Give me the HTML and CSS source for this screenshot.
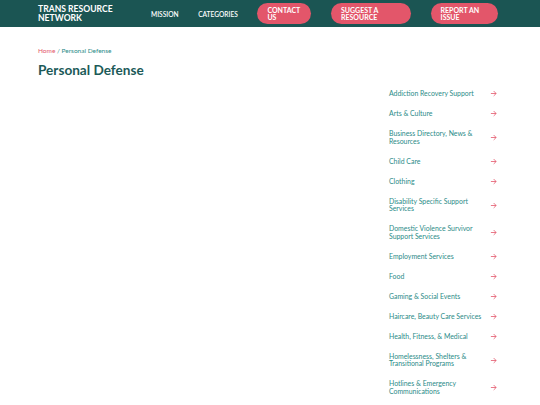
FILE: index.html
```html
<!DOCTYPE html>
<html lang="en">
<head>
<meta charset="utf-8">
<title>Personal Defense - Trans Resource Network</title>
<link rel="stylesheet" href="styles.css">
</head>
<body>
<header class="site-header">
  <div class="header-inner">
    <a class="logo" href="#"><span class="logo-line">TRANS RESOURCE</span><span class="logo-line">NETWORK</span></a>
    <nav class="main-nav">
      <a class="nav-link" href="#">MISSION</a>
      <a class="nav-link" href="#">CATEGORIES</a>
      <a class="btn btn-contact" href="#">CONTACT<br>US</a>
      <a class="btn btn-suggest" href="#">SUGGEST A<br>RESOURCE</a>
      <a class="btn btn-report" href="#">REPORT AN<br>ISSUE</a>
    </nav>
  </div>
</header>
<main class="page">
  <div class="breadcrumb"><a href="#" class="crumb-home">Home</a> / Personal Defense</div>
  <h1 class="page-title">Personal Defense</h1>
  <div class="content">
    <div class="main-col"></div>
    <aside class="sidebar">
      <ul class="cat-list">
        <li><a href="#"><span>Addiction Recovery Support</span><svg class="arrow" viewBox="0 0 8 8"><path d="M1 4H7M4.2 1.2L7 4L4.2 6.8"/></svg></a></li>
        <li><a href="#"><span>Arts &amp; Culture</span><svg class="arrow" viewBox="0 0 8 8"><path d="M1 4H7M4.2 1.2L7 4L4.2 6.8"/></svg></a></li>
        <li><a href="#"><span>Business Directory, News &amp; Resources</span><svg class="arrow" viewBox="0 0 8 8"><path d="M1 4H7M4.2 1.2L7 4L4.2 6.8"/></svg></a></li>
        <li><a href="#"><span>Child Care</span><svg class="arrow" viewBox="0 0 8 8"><path d="M1 4H7M4.2 1.2L7 4L4.2 6.8"/></svg></a></li>
        <li><a href="#"><span>Clothing</span><svg class="arrow" viewBox="0 0 8 8"><path d="M1 4H7M4.2 1.2L7 4L4.2 6.8"/></svg></a></li>
        <li><a href="#"><span>Disability Specific Support Services</span><svg class="arrow" viewBox="0 0 8 8"><path d="M1 4H7M4.2 1.2L7 4L4.2 6.8"/></svg></a></li>
        <li><a href="#"><span>Domestic Violence Survivor Support Services</span><svg class="arrow" viewBox="0 0 8 8"><path d="M1 4H7M4.2 1.2L7 4L4.2 6.8"/></svg></a></li>
        <li><a href="#"><span>Employment Services</span><svg class="arrow" viewBox="0 0 8 8"><path d="M1 4H7M4.2 1.2L7 4L4.2 6.8"/></svg></a></li>
        <li><a href="#"><span>Food</span><svg class="arrow" viewBox="0 0 8 8"><path d="M1 4H7M4.2 1.2L7 4L4.2 6.8"/></svg></a></li>
        <li><a href="#"><span>Gaming &amp; Social Events</span><svg class="arrow" viewBox="0 0 8 8"><path d="M1 4H7M4.2 1.2L7 4L4.2 6.8"/></svg></a></li>
        <li><a href="#"><span>Haircare, Beauty Care Services</span><svg class="arrow" viewBox="0 0 8 8"><path d="M1 4H7M4.2 1.2L7 4L4.2 6.8"/></svg></a></li>
        <li><a href="#"><span>Health, Fitness, &amp; Medical</span><svg class="arrow" viewBox="0 0 8 8"><path d="M1 4H7M4.2 1.2L7 4L4.2 6.8"/></svg></a></li>
        <li><a href="#"><span>Homelessness, Shelters &amp; Transitional Programs</span><svg class="arrow" viewBox="0 0 8 8"><path d="M1 4H7M4.2 1.2L7 4L4.2 6.8"/></svg></a></li>
        <li><a href="#"><span>Hotlines &amp; Emergency Communications</span><svg class="arrow" viewBox="0 0 8 8"><path d="M1 4H7M4.2 1.2L7 4L4.2 6.8"/></svg></a></li>
      </ul>
    </aside>
  </div>
</main>
</body>
</html>
```
FILE: styles.css
```css
* { box-sizing: border-box; }
body {
  margin: 0;
  font-family: Lato, "Liberation Sans", sans-serif;
  background: #fff;
  color: #1c5a58;
}
a { text-decoration: none; color: inherit; }

.site-header {
  background: #1b5553;
  height: 27px;
}
.header-inner {
  display: flex;
  align-items: center;
  height: 100%;
  padding: 0 43px 0 38px;
}
.logo {
  flex: none;
  display: flex;
  flex-direction: column;
  gap: 0.5px;
  width: 76px;
  white-space: nowrap;
  color: #fff;
  font-weight: 700;
  font-size: 8.6px;
  line-height: 9px;
  padding-top: 1px;
}
.main-nav {
  display: flex;
  align-items: center;
  margin-left: 37px;
  gap: 19.6px;
}
.nav-link {
  color: #fff;
  font-size: 6.6px;
  font-weight: 600;
  white-space: nowrap;
}
.btn {
  display: block;
  flex: none;
  background: #e3566a;
  color: #fff;
  font-size: 7px;
  font-weight: 700;
  line-height: 7px;
  height: 21px;
  border-radius: 11px;
  padding: 3.5px 0 0 10px;
  white-space: nowrap;
}
.btn-contact { width: 54px; }
.btn-suggest { width: 80px; }
.btn-report { width: 67px; }

.page {
  padding: 0 43px 0 38px;
}
.breadcrumb {
  margin-top: 20px;
  font-size: 6.5px;
  line-height: 8px;
  color: #2b8b88;
}
.crumb-home { color: #e3566a; }
.page-title {
  margin: 6px 0 0;
  font-size: 13.6px;
  line-height: 18px;
  font-weight: 700;
  color: #1c5a58;
}
.content {
  display: flex;
  margin-top: 11px;
}
.main-col { flex: 1; }
.sidebar { width: 108px; }
.cat-list {
  list-style: none;
  margin: 0;
  padding: 0;
  display: flex;
  flex-direction: column;
  gap: 12.5px;
}
.cat-list a {
  display: flex;
  align-items: center;
  justify-content: space-between;
  color: #2b8b88;
  font-size: 6.9px;
  line-height: 7.5px;
}
.cat-list span { width: 95px; }
.arrow {
  width: 7px;
  height: 7px;
  fill: none;
  stroke: #e3566a;
  stroke-width: 0.9;
  flex: none;
}
```
